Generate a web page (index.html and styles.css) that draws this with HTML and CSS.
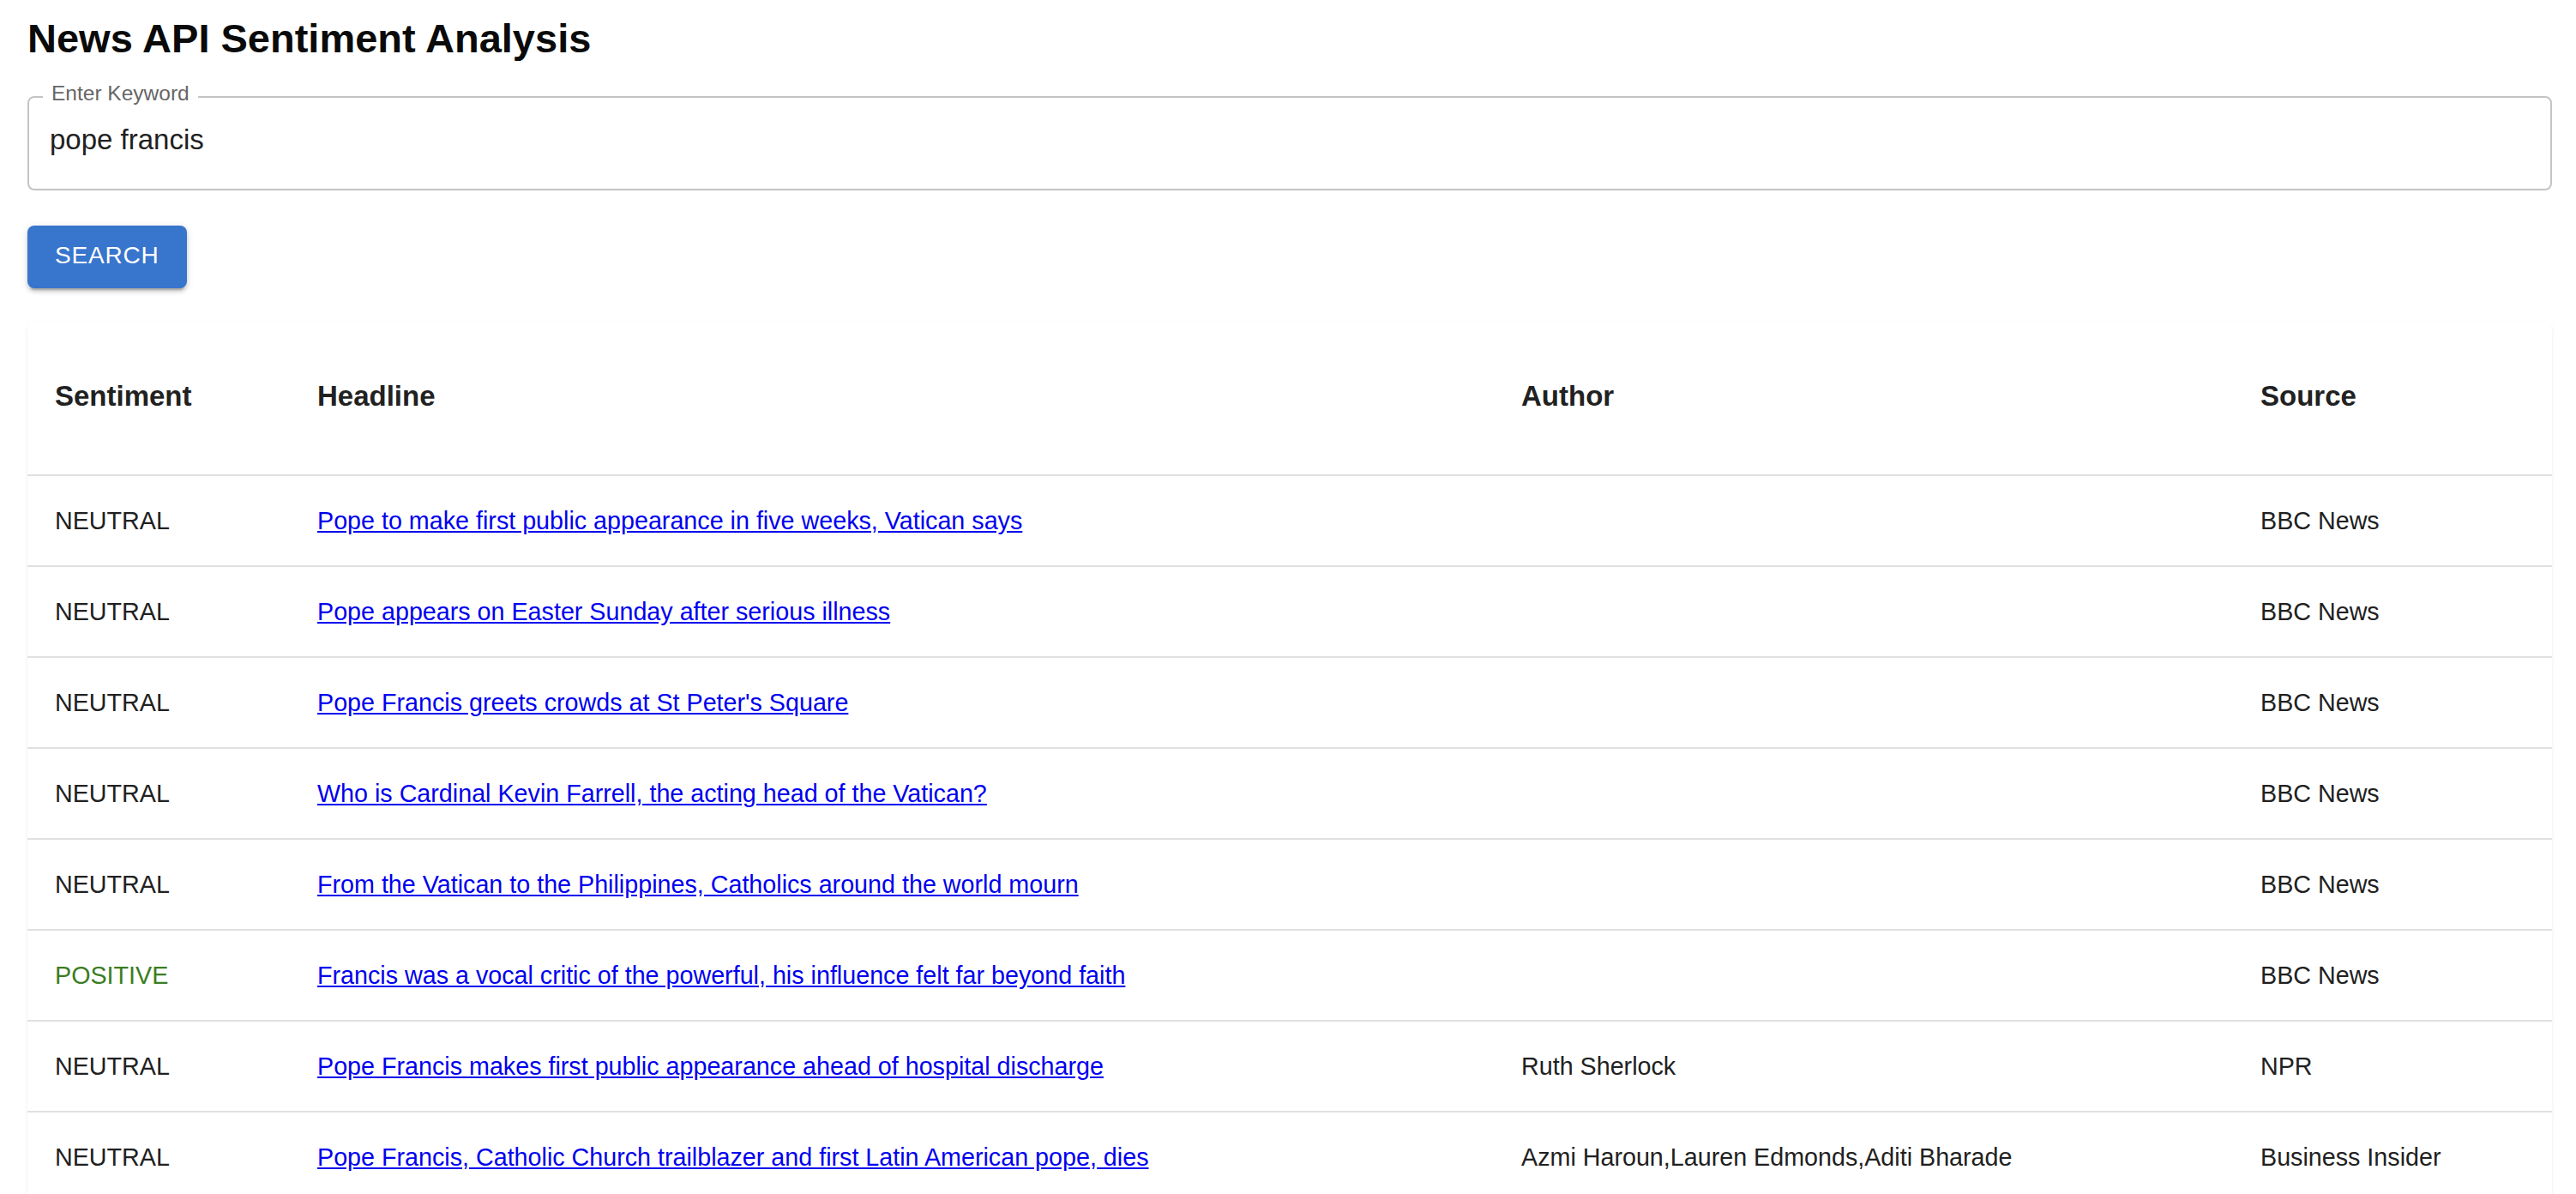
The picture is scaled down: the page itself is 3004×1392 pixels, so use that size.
FILE: index.html
```html
<!DOCTYPE html>
<html lang="en">
<head>
<meta charset="utf-8">
<title>News API Sentiment Analysis</title>
<link rel="stylesheet" href="styles.css">
</head>
<body>
<div class="page">
  <h1 class="title">News API Sentiment Analysis</h1>
  <fieldset class="field">
    <legend class="field-label">Enter Keyword</legend>
    <input class="field-input" type="text" value="pope francis">
  </fieldset>
  <button class="search-btn" type="button">Search</button>
  <div class="paper">
    <table class="news-table">
      <colgroup>
        <col class="c-sent">
        <col class="c-head">
        <col class="c-auth">
        <col class="c-src">
      </colgroup>
      <thead>
        <tr>
          <th>Sentiment</th>
          <th>Headline</th>
          <th>Author</th>
          <th>Source</th>
        </tr>
      </thead>
      <tbody>
        <tr>
          <td>NEUTRAL</td>
          <td><a href="#">Pope to make first public appearance in five weeks, Vatican says</a></td>
          <td></td>
          <td>BBC News</td>
        </tr>
        <tr>
          <td>NEUTRAL</td>
          <td><a href="#">Pope appears on Easter Sunday after serious illness</a></td>
          <td></td>
          <td>BBC News</td>
        </tr>
        <tr>
          <td>NEUTRAL</td>
          <td><a href="#">Pope Francis greets crowds at St Peter's Square</a></td>
          <td></td>
          <td>BBC News</td>
        </tr>
        <tr>
          <td>NEUTRAL</td>
          <td><a href="#">Who is Cardinal Kevin Farrell, the acting head of the Vatican?</a></td>
          <td></td>
          <td>BBC News</td>
        </tr>
        <tr>
          <td>NEUTRAL</td>
          <td><a href="#">From the Vatican to the Philippines, Catholics around the world mourn</a></td>
          <td></td>
          <td>BBC News</td>
        </tr>
        <tr>
          <td class="positive">POSITIVE</td>
          <td><a href="#">Francis was a vocal critic of the powerful, his influence felt far beyond faith</a></td>
          <td></td>
          <td>BBC News</td>
        </tr>
        <tr>
          <td>NEUTRAL</td>
          <td><a href="#">Pope Francis makes first public appearance ahead of hospital discharge</a></td>
          <td>Ruth Sherlock</td>
          <td>NPR</td>
        </tr>
        <tr>
          <td>NEUTRAL</td>
          <td><a href="#">Pope Francis, Catholic Church trailblazer and first Latin American pope, dies</a></td>
          <td>Azmi Haroun,Lauren Edmonds,Aditi Bharade</td>
          <td>Business Insider</td>
        </tr>
      </tbody>
    </table>
  </div>
</div>
</body>
</html>
```

FILE: styles.css
```css
* {
  box-sizing: border-box;
}

html, body {
  margin: 0;
  padding: 0;
  background: #ffffff;
}

body {
  font-family: "Liberation Sans", Arial, Helvetica, sans-serif;
  color: #212121;
}

.page {
  padding: 17px 28px 40px 32px;
}

.title {
  margin: 0;
  font-size: 47px;
  line-height: 56px;
  font-weight: 700;
  color: #0a0a0a;
}

.field {
  margin: 24px 0 0 0;
  padding: 0 0 25px 0;
  border: 2px solid #c4c4c4;
  border-radius: 8px;
  min-width: 0;
}

.field-label {
  margin-left: 16px;
  padding: 0 10px 8px 10px;
  font-size: 24.5px;
  line-height: 24px;
  color: #666666;
}

.field-input {
  display: block;
  width: 100%;
  height: 66px;
  margin: 0;
  padding: 2px 0 0 24px;
  border: none;
  outline: none;
  background: transparent;
  font-family: "Liberation Sans", Arial, Helvetica, sans-serif;
  font-size: 33px;
  line-height: 64px;
  color: #212121;
}

.search-btn {
  display: block;
  margin-top: 41px;
  height: 73px;
  padding: 0 32px 3px 32px;
  border: none;
  border-radius: 8px;
  background: #3875cd;
  color: #ffffff;
  font-family: "Liberation Sans", Arial, Helvetica, sans-serif;
  font-size: 28px;
  font-weight: 400;
  letter-spacing: 0.8px;
  text-transform: uppercase;
  box-shadow: 0 6px 2px -4px rgba(0, 0, 0, 0.2),
              0 4px 4px 0 rgba(0, 0, 0, 0.14),
              0 2px 10px 0 rgba(0, 0, 0, 0.12);
}

.paper {
  margin-top: 40px;
  background: #ffffff;
  border-radius: 8px;
  overflow: hidden;
  box-shadow: 0 4px 2px -2px rgba(0, 0, 0, 0.08),
              0 2px 2px 0 rgba(0, 0, 0, 0.05),
              0 2px 6px 0 rgba(0, 0, 0, 0.05);
}

.news-table {
  width: 100%;
  table-layout: fixed;
  border-collapse: separate;
  border-spacing: 0;
}

.c-sent { width: 306px; }
.c-head { width: 1404px; }
.c-auth { width: 862px; }
.c-src { width: auto; }

.news-table th {
  height: 179px;
  padding: 0 32px 6px 32px;
  text-align: left;
  vertical-align: middle;
  font-size: 33px;
  line-height: 48px;
  font-weight: 700;
  color: #212121;
  border-bottom: 2px solid #e0e0e0;
}

.news-table td {
  height: 106px;
  padding: 0 32px;
  font-size: 28.7px;
  line-height: 40px;
  color: #212121;
  vertical-align: middle;
  border-bottom: 2px solid #e0e0e0;
  white-space: nowrap;
}

.news-table td a {
  color: #0000ee;
  text-decoration: underline;
}

.news-table td.positive {
  color: #3a7d22;
}
```
